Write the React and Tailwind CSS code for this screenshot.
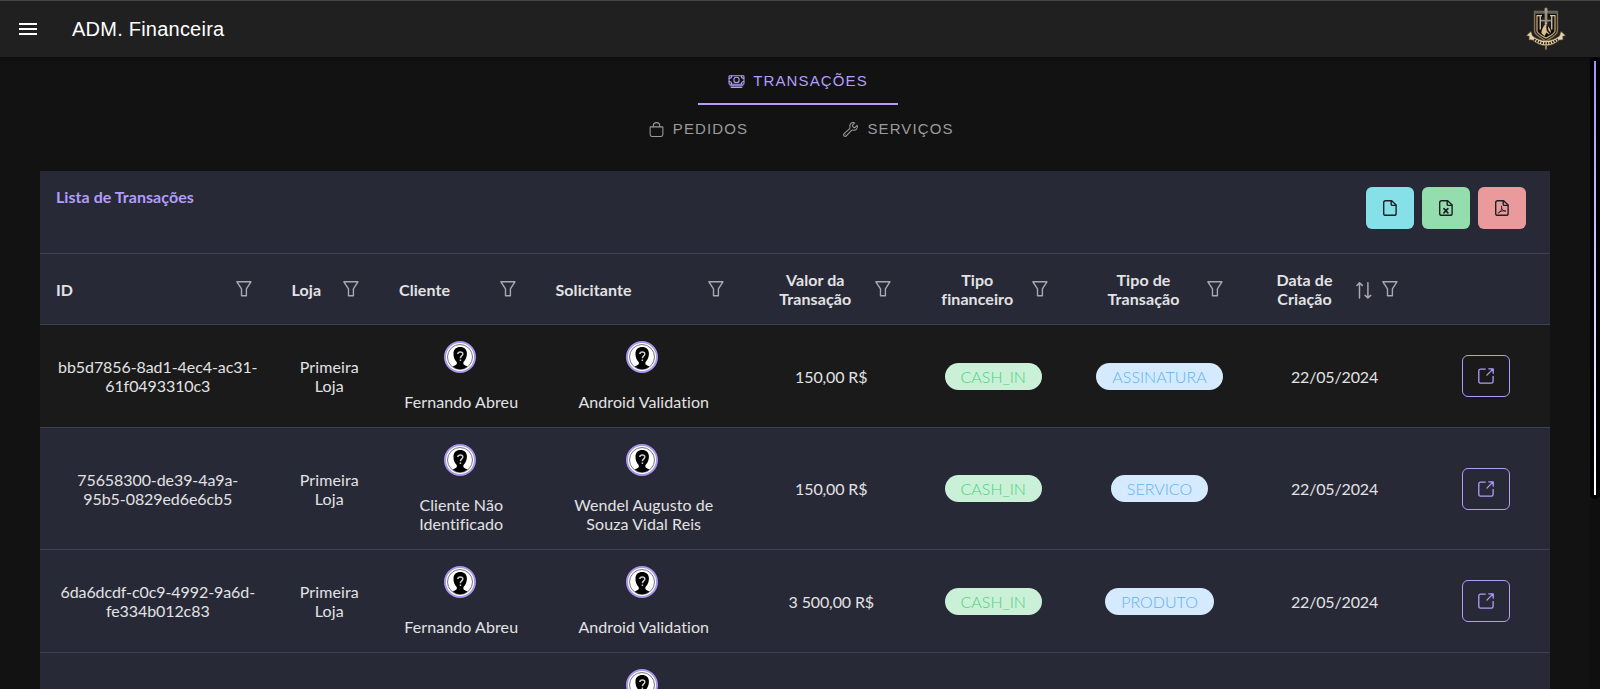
import React from "react";
import { IoCashOutline, IoBagOutline, IoBuildOutline } from "react-icons/io5";

const COLS =
  "grid grid-cols-[235.5px_107.5px_156.5px_208.5px_166.5px_157.5px_175px_175px_128px]";

const COLUMNS = [
  { title: "ID" },
  { title: "Loja" },
  { title: "Cliente" },
  { title: "Solicitante" },
  { title: "Valor da Transação", wrap: true },
  { title: "Tipo financeiro", wrap: true },
  { title: "Tipo de Transação", wrap: true },
  { title: "Data de Criação", wrap: true, sort: true },
];

const ROWS = [
  {
    id: "bb5d7856-8ad1-4ec4-ac31-61f0493310c3",
    client: "Fernando Abreu",
    requester: "Android Validation",
    value: "150,00 R$",
    type: "ASSINATURA",
    selected: true,
  },
  {
    id: "75658300-de39-4a9a-95b5-0829ed6e6cb5",
    client: "Cliente Não Identificado",
    requester: "Wendel Augusto de Souza Vidal Reis",
    value: "150,00 R$",
    type: "SERVICO",
  },
  {
    id: "6da6dcdf-c0c9-4992-9a6d-fe334b012c83",
    client: "Fernando Abreu",
    requester: "Android Validation",
    value: "3 500,00 R$",
    type: "PRODUTO",
  },
];

function Crest() {
  return (
    <svg width="40" height="44" viewBox="0 0 40 44" fill="none">
      <path d="M8.600 4.500h22.800v19.500c0 4-6 6.500-11.400 10C14.600 30.500 8.600 28 8.600 24Z" fill="#0c0e14" stroke="#8a7552" strokeWidth="1.500" />
      <path d="M8 5.500h9.500v-1M32 5.500h-9.500v-1" stroke="#62625f" strokeWidth="2.600" />
      <path d="M11 9v15c0 2.600 4.500 4.600 9 7.300 4.500-2.700 9-4.700 9-7.300V9" stroke="#c3a672" strokeWidth="1.300" />
      <path d="M10.500 8.600h5.500M24 8.600h5.500" stroke="#d9c7a0" strokeWidth="1.200" />
      <path d="M14.300 9v13.500M25.700 9v13.500" stroke="#cdb88c" strokeWidth="1.500" />
      <path d="M17 10v10M23 10v10" stroke="#1c2740" strokeWidth="1.500" />
      <path d="M20 2.500v15" stroke="#c9b89a" strokeWidth="2.600" />
      <path d="M20 4v12" stroke="#5b5346" strokeWidth="0.800" />
      <circle cx="20" cy="2" r="1.500" fill="#a89878" />
      <path d="M15 13.600h10" stroke="#9b8f78" strokeWidth="1.600" />
      <path d="M19.500 17c-2 2-4 5.500-4.200 9l3.200 3 2-3.500 2.500 2 2-2c-.3-3.500-2.500-6.500-5.500-8.500Z" fill="#e0bf8c" />
      <path d="M21 18.500l.5 5 2.800 3" stroke="#101014" strokeWidth="1.700" />
      <path d="M.5 28.500l4.500-4 1.500 4.500c8.500 6.300 18.500 6.300 27 0l1.500-4.500 4.500 4-2.800.8.300 3.400-3.500.3c-8.500 7.500-18.500 7.500-27 0L3 32.700l.3-3.400Z" fill="#e6d5ac" stroke="#6b5638" strokeWidth="0.600" />
      <path d="M8 32.300c7.500 5.400 16.500 5.400 24 0" stroke="#2b2620" strokeWidth="2.200" strokeDasharray="1.600 1.100" />
      <path d="M20 38.500v4" stroke="#a5854f" strokeWidth="1.800" />
    </svg>
  );
}

function Avatar() {
  return (
    <svg width="32" height="32" viewBox="0 0 32 32" fill="none" className="block">
      <circle cx="16" cy="16" r="15" fill="#fff" stroke="#a996f0" strokeWidth="2" />
      <circle cx="16" cy="16" r="12.500" stroke="#777" strokeWidth="1" />
      <path d="M16.200 6c-4 0-6.900 2.600-6.700 6.600-.2 3.400 1 6.400 3.200 8.500.5 1.800 0 2.800-1.800 3.400-1.100.4-1.700.7-2 1.300a11.500 11.500 0 0 0 14.400 0c-.3-.6-1-.9-2.100-1.300-1.700-.6-2.200-1.600-1.700-3.400 2.200-2.100 3.400-5.100 3.400-8.500.2-4-2.700-6.600-6.700-6.600Z" fill="#000" />
      <path d="M13.800 13c.1-1.300 1.300-2.100 2.500-2.100 1.500 0 2.500.8 2.500 2 0 1.900-2.400 2.100-2.400 4.300" stroke="#ccc" strokeWidth="1.500" />
      <path d="M16.400 18.500v1.500" stroke="#ccc" strokeWidth="1.500" />
    </svg>
  );
}

function FilterIcon() {
  return (
    <svg width="16" height="17" viewBox="0 0 16 17" fill="none" stroke="#a9a9ae" strokeWidth="1.400" strokeLinejoin="round">
      <path d="M.9 1.800h14l-4.500 7v7H5.500v-7Z" />
    </svg>
  );
}

function SortIcon() {
  return (
    <svg width="16" height="18" viewBox="0 0 16 18" fill="none" stroke="#a9a9ae" strokeWidth="1.500" strokeLinecap="round" strokeLinejoin="round">
      <path d="M3.500 17V1.800M1 4.400l2.500-2.600L6.300 4.400" />
      <path d="M11.900 1.800V17M9.100 14.400l2.800 2.600 2.800-2.600" />
    </svg>
  );
}

function FileIcon({ kind }) {
  return (
    <svg width="14" height="16" viewBox="0 0 14 16" fill="none" stroke="#1c2127" strokeWidth="1.400" strokeLinejoin="round" strokeLinecap="round">
      <path d="M8.700.7H2.600A1.900 1.900 0 0 0 .7 2.600v10.800a1.900 1.900 0 0 0 1.900 1.900h8.600a1.900 1.900 0 0 0 1.900-1.900V5.100Z" />
      <path d="M8.200.9v3.500a1 1 0 0 0 1 1h3.600" />
      {kind === "excel" && <path d="M4.900 8.600l4 4.300M8.900 8.600l-4 4.300" strokeWidth="1.600" />}
      {kind === "pdf" && (
        <path d="M6.500 6.200c.5 1.500.2 3-.6 4.300-.8 1.400-1.900 2.700-2.700 2.500M6.700 8.500c.6 1.500 1.800 2.400 3.800 2.600M4 12.400c1.500-1.300 3.400-1.700 6.200-1.500" strokeWidth="1" />
      )}
    </svg>
  );
}

function OpenIcon() {
  return (
    <svg width="16" height="16" viewBox="0 0 16 16" fill="none" stroke="#b19df7" strokeWidth="1.300" strokeLinecap="round" strokeLinejoin="round">
      <path d="M7.300 1.100H2.500A1.700 1.700 0 0 0 .8 2.800v10.700a1.700 1.700 0 0 0 1.700 1.700h10.900a1.700 1.700 0 0 0 1.700-1.700V8.400" />
      <path d="M10.800.8h4.400v4.400M15.100.9L8.900 7.100" />
    </svg>
  );
}

function Tab({ icon: Icon, label, active }) {
  return (
    <button
      className={
        active
          ? "flex h-12 w-[200px] items-center justify-center gap-2 border-b-2 border-[#b39dfa] pt-0.5 text-[#b39dfa]"
          : "flex h-12 w-[200px] items-center justify-center gap-2 border-b-2 border-transparent pt-0.5 text-[#9b9b9b]"
      }
    >
      <Icon className="size-[17px]" />
      <span className="text-[15px] leading-6 tracking-[1.12px]">{label}</span>
    </button>
  );
}

function Person({ name }) {
  return (
    <div className="flex h-full flex-col items-center gap-[19px] px-4 py-4">
      <div className="pr-[3px]">
        <Avatar />
      </div>
      <span className="text-center tracking-[0.08px]">{name}</span>
    </div>
  );
}

function Row({ row }) {
  return (
    <div
      className={
        row.selected
          ? COLS + " items-center border-b border-[#3e4053] bg-[#1a1a1a] [font-variant-ligatures:none]"
          : COLS + " items-center border-b border-[#3e4053] [font-variant-ligatures:none]"
      }
    >
      <div className="px-[17px] text-center tracking-[-0.08px]">{row.id}</div>
      <div className="px-4 text-center tracking-[0.1px]">Primeira Loja</div>
      <Person name={row.client} />
      <Person name={row.requester} />
      <div className="px-4 text-center tracking-[-0.12px]">{row.value}</div>
      <div className="flex justify-center">
        <span className="rounded-full bg-[#caf1d8] px-4 py-1 font-light text-[#4cd07d]">CASH_IN</span>
      </div>
      <div className="flex justify-center">
        <span className="rounded-full bg-[#d5eafc] px-4 py-1 font-light text-[#5eb3f6]">{row.type}</span>
      </div>
      <div className="px-4 text-center tracking-[-0.15px]">22/05/2024</div>
      <div className="flex justify-center">
        <button className="flex h-[42px] w-12 items-center justify-center rounded-md border border-[#b19df7]">
          <OpenIcon />
        </button>
      </div>
    </div>
  );
}

export default function App() {
  return (
    <div className="flex h-[689px] w-[1600px] flex-col overflow-hidden bg-[#121212] font-['Liberation_Sans',sans-serif]">
      <header className="z-10 flex h-[57px] shrink-0 items-center justify-between border-t border-[#444746] bg-[#202020] pr-[34px] pl-[19px] shadow-[0_2px_4px_rgba(0,0,0,0.35)]">
        <div className="flex items-center gap-[35px]">
          <button className="flex w-[18px] flex-col gap-[3px]">
            <span className="h-0.5 bg-white" />
            <span className="h-0.5 bg-white" />
            <span className="h-0.5 bg-white" />
          </button>
          <h1 className="text-xl tracking-[0.23px] text-white">ADM. Financeira</h1>
        </div>
        <Crest />
      </header>

      <div className="flex min-h-0 flex-1">
        <main className="flex w-[1590px] flex-col">
          <nav className="flex flex-col items-center pl-[6px]">
            <Tab icon={IoCashOutline} label="TRANSAÇÕES" active />
            <div className="flex">
              <Tab icon={IoBagOutline} label="PEDIDOS" />
              <Tab icon={IoBuildOutline} label="SERVIÇOS" />
            </div>
          </nav>

          <section className="mt-[18px] ml-10 w-[1510px] bg-[#282936] font-['Lato',sans-serif] text-base leading-[19px] text-[#e2e2e4]">
            <div className="flex h-[83px] items-start justify-between border-b border-[#3e4053] pt-4 pr-6 pl-4">
              <h2 className="font-bold tracking-[0.05px] text-[#b39dfa]">Lista de Transações</h2>
              <div className="flex gap-2">
                <button className="flex h-[42px] w-12 items-center justify-center rounded-md bg-[#85e0e7]">
                  <FileIcon />
                </button>
                <button className="flex h-[42px] w-12 items-center justify-center rounded-md bg-[#93deac]">
                  <FileIcon kind="excel" />
                </button>
                <button className="flex h-[42px] w-12 items-center justify-center rounded-md bg-[#eb9a9c]">
                  <FileIcon kind="pdf" />
                </button>
              </div>
            </div>

            <div className={COLS + " h-[71px] items-center border-b border-[#3e4053] font-bold tracking-[0.08px]"}>
              {COLUMNS.map((col) => (
                <div key={col.title} className="flex items-center px-4">
                  <span className={col.wrap ? "flex-1 text-center" : "flex-1 text-left"}>{col.title}</span>
                  {col.sort && (
                    <span className="mr-0.5 ml-2.5 flex pt-0.5">
                      <SortIcon />
                    </span>
                  )}
                  <span className="flex w-8 justify-center pb-px">
                    <FilterIcon />
                  </span>
                </div>
              ))}
              <div />
            </div>

            {ROWS.map((row) => (
              <Row key={row.id} row={row} />
            ))}

            <div className={COLS + " h-[103px]"}>
              <div />
              <div />
              <div />
              <Person name="" />
            </div>
          </section>
        </main>

        <div className="w-[10px] bg-[#0f0f0f]">
          <div className="flex h-[442px] justify-center rounded-full bg-black py-1">
            <div className="w-0.5 bg-linear-to-b from-[#a68ffa] to-white" />
          </div>
        </div>
      </div>
    </div>
  );
}
